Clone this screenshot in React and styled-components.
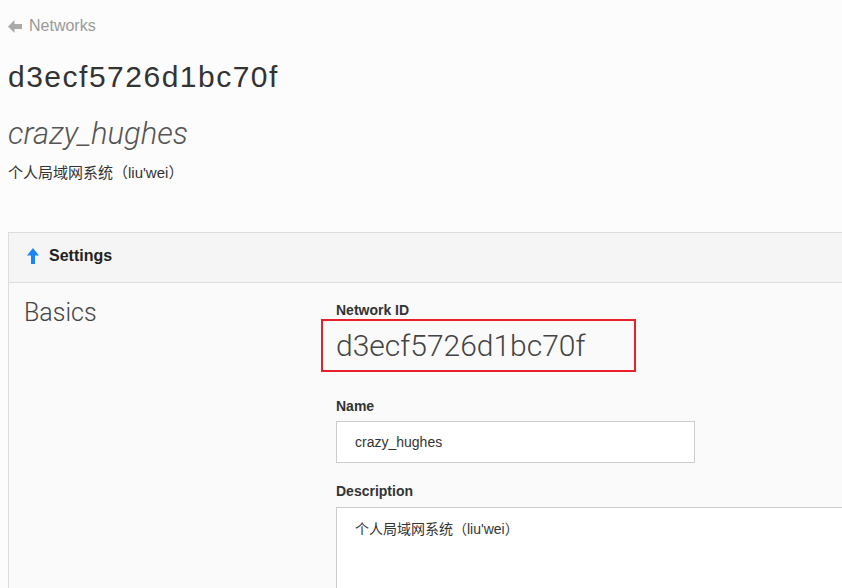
import React from "react";
import styled, { createGlobalStyle } from "styled-components";

const Global = createGlobalStyle`
  html, body { margin: 0; padding: 0; background: #fcfcfc; overflow: hidden; }
  body { font-family: "Liberation Sans", "Noto Sans CJK SC", sans-serif; color: #333; }
  * { box-sizing: border-box; }
`;

const Page = styled.div`
  padding: 16px 0 0 8px;
  width: 960px;
`;

const BackLink = styled.a`
  display: flex;
  align-items: center;
  gap: 7px;
  font-size: 16px;
  line-height: 20px;
  color: #999;
  text-decoration: none;
`;

const Title = styled.h1`
  margin: 21px 0 0;
  font-size: 30px;
  line-height: 40px;
  font-weight: 400;
  letter-spacing: 1.5px;
  color: #333;
`;

const Subtitle = styled.h2`
  margin: 20px 0 0;
  font-family: Roboto, "Liberation Sans", sans-serif;
  font-style: italic;
  font-weight: 300;
  font-size: 31px;
  line-height: 34px;
  color: #555;
`;

const Desc = styled.p`
  margin: 12px 0 0;
  font-size: 15px;
  line-height: 20px;
  color: #333;
`;

const Panel = styled.section`
  margin-top: 49px;
  border: 1px solid #ddd;
  background: #fafafa;
  width: 920px;
`;

const PanelHeader = styled.div`
  display: flex;
  align-items: center;
  gap: 10px;
  height: 50px;
  padding: 0 0 4px 18px;
  background: #f5f5f5;
  border-bottom: 1px solid #ddd;
  font-weight: 700;
  font-size: 16px;
  color: #222;
`;

const PanelBody = styled.div`
  display: grid;
  grid-template-columns: 312px 1fr;
  padding: 16px 0 0 15px;
  min-height: 320px;
`;

const SectionTitle = styled.h3`
  margin: 0;
  font-family: Roboto, "Liberation Sans", sans-serif;
  font-weight: 300;
  font-size: 25px;
  line-height: 28px;
  color: #444;
`;

const Fields = styled.div`
  display: flex;
  flex-direction: column;
  padding-top: 2px;
`;

const Label = styled.label`
  display: block;
  font-weight: 700;
  font-size: 14px;
  line-height: 18px;
  color: #333;
  margin: ${(p) => p.$top || 0}px 0 ${(p) => p.$bottom || 0}px;
`;

const IdBox = styled.div`
  margin-left: -15px;
  width: 315px;
  height: 53px;
  border: 2px solid #e8202a;
  padding-left: 13px;
  display: flex;
  align-items: center;
  font-family: Roboto, "Liberation Sans", sans-serif;
  font-weight: 300;
  font-size: 30px;
  color: #444;
`;

const TextInput = styled.input`
  width: 359px;
  height: 42px;
  border: 1px solid #ccc;
  background: #fff;
  padding: 0 18px;
  font-family: "Liberation Sans", sans-serif;
  font-size: 14px;
  color: #333;
  outline: none;
`;

const TextArea = styled.textarea`
  width: 600px;
  height: 140px;
  border: 1px solid #ccc;
  background: #fff;
  padding: 11px 18px;
  font-family: "Liberation Sans", "Noto Sans CJK SC", sans-serif;
  font-size: 14px;
  line-height: 20px;
  color: #333;
  resize: none;
  outline: none;
`;

const ArrowLeft = () => (
  <svg width="14" height="13" viewBox="0 0 14 13">
    <path d="M0 6.5 L6.5 0 L6.5 4 L14 4 L14 9 L6.5 9 L6.5 13 Z" fill="#aaa" />
  </svg>
);

const ArrowUp = () => (
  <svg width="12" height="16" viewBox="0 0 12 16">
    <path d="M6 0 L12 7.5 L8 7.5 L8 16 L4 16 L4 7.5 L0 7.5 Z" fill="#1a86f5" />
  </svg>
);

export default function App() {
  return (
    <>
      <Global />
      <Page>
        <BackLink href="#">
          <ArrowLeft />
          Networks
        </BackLink>
        <Title>d3ecf5726d1bc70f</Title>
        <Subtitle>crazy_hughes</Subtitle>
        <Desc>个人局域网系统（liu'wei）</Desc>
        <Panel>
          <PanelHeader>
            <ArrowUp />
            Settings
          </PanelHeader>
          <PanelBody>
            <SectionTitle>Basics</SectionTitle>
            <Fields>
              <Label>Network ID</Label>
              <IdBox>d3ecf5726d1bc70f</IdBox>
              <Label $top={25} $bottom={6}>Name</Label>
              <TextInput readOnly value="crazy_hughes" />
              <Label $top={19} $bottom={7}>Description</Label>
              <TextArea readOnly value={"个人局域网系统（liu'wei）"} />
            </Fields>
          </PanelBody>
        </Panel>
      </Page>
    </>
  );
}
